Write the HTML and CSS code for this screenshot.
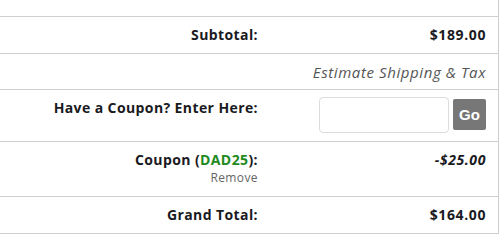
FILE: index.html
```html
<!DOCTYPE html>
<html>
<head>
<meta charset="utf-8">
<link rel="stylesheet" href="styles.css">
</head>
<body>
<div class="totals">
  <div class="row row-top"><div class="label"></div><div class="value"></div></div>
  <div class="row"><div class="label">Subtotal:</div><div class="value amount">$189.00</div></div>
  <div class="row row-ship"><div class="label"></div><div class="value ship">Estimate Shipping &amp; Tax</div></div>
  <div class="row row-coupon">
    <div class="label">Have a Coupon? Enter Here:</div>
    <div class="value coupon-form"><input class="coupon-input" type="text"><button class="go">Go</button></div>
  </div>
  <div class="row row-applied">
    <div class="label">Coupon (<span class="code">DAD25</span>):<div class="remove">Remove</div></div>
    <div class="value amount discount">-$25.00</div>
  </div>
  <div class="row"><div class="label">Grand Total:</div><div class="value amount">$164.00</div></div>
</div>
</body>
</html>
```
FILE: styles.css
```css
html, body { margin: 0; padding: 0; background: #fff; }
body { font-family: "Open Sans", "Liberation Sans", sans-serif; color: #1a1a22; }
.totals { width: 498px; border-right: 1px solid #cfcfcf; }
.row { display: grid; grid-template-columns: 270px 1fr; border-bottom: 1px solid #cfcfcf; height: 37px; box-sizing: border-box; }
.row-top { height: 17px; }
.row-ship { height: 36px; }
.row-coupon { height: 52px; }
.row-applied { height: 55px; }
.label { text-align: right; padding: 8px 12px 0 0; font-weight: 700; font-size: 14px; letter-spacing: 0.4px; line-height: 20px; }
.value { text-align: right; padding: 8px 12px 0 0; font-size: 14px; line-height: 20px; }
.amount { font-weight: 700; letter-spacing: 0.6px; }
.discount { font-style: italic; }
.ship { font-style: italic; color: #555; font-size: 15px; letter-spacing: 0.6px; font-weight: 400; }
.code { color: #1e8a1e; }
.remove { font-weight: 400; font-size: 12px; letter-spacing: 0.4px; color: #666; line-height: 14px; margin-top: 1px; }
.coupon-form { display: flex; justify-content: flex-end; align-items: flex-start; gap: 4px; padding-top: 7px; }
.coupon-input { width: 130px; height: 36px; box-sizing: border-box; border: 1px solid #dcdcdc; border-radius: 4px; margin: 0; }
.go { width: 33px; height: 31px; margin-top: 2px; background: #777; color: #fff; border: none; border-radius: 2px; font-family: "Liberation Sans", sans-serif; font-weight: 700; font-size: 15px; letter-spacing: 0; padding: 0; }
```
